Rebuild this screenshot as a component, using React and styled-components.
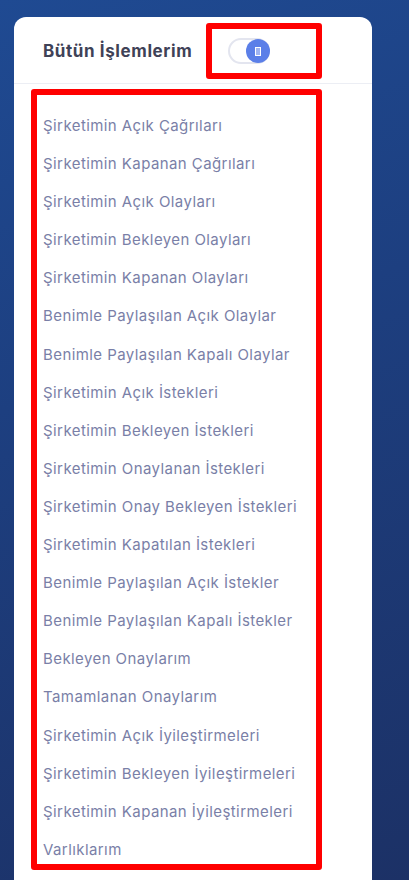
import React from "react";
import styled, { createGlobalStyle } from "styled-components";

const Global = createGlobalStyle`
  html, body { margin: 0; padding: 0; }
  body {
    width: 409px;
    height: 880px;
    overflow: hidden;
    font-family: "Inter", "Noto Sans", sans-serif;
    background: linear-gradient(160deg, #1f4a92 0%, #1d3f80 40%, #1c3166 100%);
  }
`;

const Page = styled.div`
  padding: 17px 37px 0 14px;
  height: 880px;
  box-sizing: border-box;
`;

const Card = styled.div`
  background: #fff;
  border-radius: 12px 12px 0 0;
  height: 863px;
  display: flex;
  flex-direction: column;
`;

const Header = styled.div`
  display: flex;
  align-items: flex-start;
  height: 67px;
  box-sizing: border-box;
  border-bottom: 1px solid #eceef4;
  padding: 6px 0 0 29px;
`;

const Title = styled.h3`
  flex: 0 0 150px;
  margin: 0;
  font-size: 17px;
  font-weight: 700;
  color: #3f4257;
  line-height: 56px;
  letter-spacing: 0.6px;
  white-space: nowrap;
`;

const Highlight = styled.div`
  border: 6px solid #ff0000;
  border-radius: 3px;
  box-sizing: border-box;
`;

const ToggleBox = styled(Highlight)`
  flex: 0 0 116px;
  margin-left: 13px;
  width: 116px;
  height: 56px;
  padding: 9px 0 0 16px;
`;

const Track = styled.div`
  width: 42px;
  height: 26px;
  box-sizing: border-box;
  border: 2px solid #e3e5ef;
  border-radius: 13px;
  background: #fff;
  display: flex;
  align-items: center;
  justify-content: flex-end;
`;

const Knob = styled.div`
  flex: 0 0 24px;
  width: 24px;
  height: 24px;
  margin-right: -2px;
  border-radius: 50%;
  background: #5b7fe8;
  display: flex;
  align-items: center;
  justify-content: center;
`;

const KnobMark = styled.div`
  width: 4px;
  height: 7px;
  border: 1.5px solid #fff;
  background: #9fb4f2;
`;

const Body = styled.div`
  padding: 5px 0 0 17px;
`;

const ListBox = styled(Highlight)`
  width: 291px;
  padding: 12px 0 0 6px;
  height: 781px;
  overflow: hidden;
`;

const Item = styled.div`
  height: 38.1px;
  line-height: 38px;
  font-size: 15px;
  color: #7a7fa7;
  white-space: nowrap;
  letter-spacing: 0.42px;
`;

const items = [
  "Şirketimin Açık Çağrıları",
  "Şirketimin Kapanan Çağrıları",
  "Şirketimin Açık Olayları",
  "Şirketimin Bekleyen Olayları",
  "Şirketimin Kapanan Olayları",
  "Benimle Paylaşılan Açık Olaylar",
  "Benimle Paylaşılan Kapalı Olaylar",
  "Şirketimin Açık İstekleri",
  "Şirketimin Bekleyen İstekleri",
  "Şirketimin Onaylanan İstekleri",
  "Şirketimin Onay Bekleyen İstekleri",
  "Şirketimin Kapatılan İstekleri",
  "Benimle Paylaşılan Açık İstekler",
  "Benimle Paylaşılan Kapalı İstekler",
  "Bekleyen Onaylarım",
  "Tamamlanan Onaylarım",
  "Şirketimin Açık İyileştirmeleri",
  "Şirketimin Bekleyen İyileştirmeleri",
  "Şirketimin Kapanan İyileştirmeleri",
  "Varlıklarım",
];

export default function App() {
  return (
    <>
      <Global />
      <Page>
        <Card>
          <Header>
            <Title>Bütün İşlemlerim</Title>
            <ToggleBox>
              <Track>
                <Knob>
                  <KnobMark />
                </Knob>
              </Track>
            </ToggleBox>
          </Header>
          <Body>
            <ListBox>
              {items.map((t) => (
                <Item key={t}>{t}</Item>
              ))}
            </ListBox>
          </Body>
        </Card>
      </Page>
    </>
  );
}
